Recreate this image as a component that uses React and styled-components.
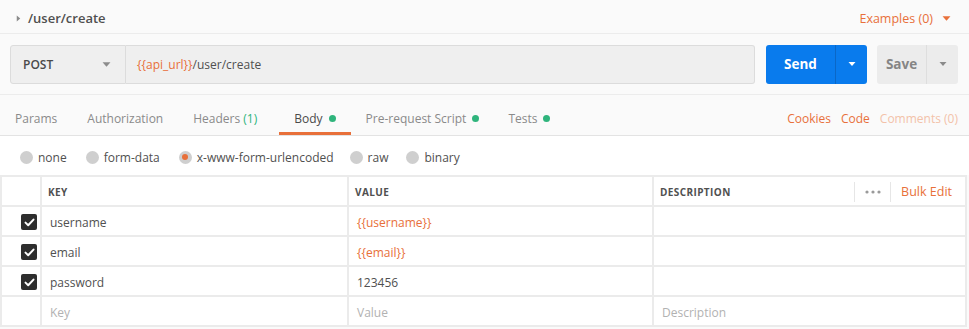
import React from "react";
import styled, { createGlobalStyle } from "styled-components";

const ORANGE = "#e8703a";
const GREEN = "#2fb47c";

const GlobalStyle = createGlobalStyle`
  body {
    margin: 0;
    font-family: "Open Sans", "Noto Sans", sans-serif;
    background: #fafafa;
  }
`;

const Page = styled.div`
  width: 969px;
  height: 329px;
  background: #fafafa;
  overflow: hidden;
  color: #505050;
  font-size: 12px;
`;

const TitleBar = styled.div`
  height: 34px;
  box-sizing: border-box;
  display: flex;
  align-items: center;
  justify-content: space-between;
  padding: 3px 18px 0 15px;
  border-bottom: 1px solid #ececec;
`;

const Title = styled.div`
  display: flex;
  align-items: center;
  gap: 6px;
  font-size: 13px;
  font-weight: 600;
  color: #4f4f4f;
`;

const Examples = styled.div`
  display: flex;
  align-items: center;
  gap: 9px;
  color: ${ORANGE};
  font-size: 12.5px;
`;

const RequestBar = styled.div`
  height: 60px;
  display: flex;
  align-items: center;
  padding: 0 11px 0 10px;
  border-bottom: 1px solid #ececec;
`;

const Method = styled.div`
  width: 116px;
  height: 39px;
  box-sizing: border-box;
  display: flex;
  align-items: center;
  justify-content: space-between;
  padding: 0 14px 0 12px;
  background: #efefef;
  border: 1px solid #dcdcdc;
  border-radius: 3px 0 0 3px;
  font-weight: 600;
  color: #4a4a4a;
`;

const Url = styled.div`
  flex: 1;
  height: 39px;
  box-sizing: border-box;
  display: flex;
  align-items: center;
  padding-left: 11px;
  background: #efefef;
  border: 1px solid #dcdcdc;
  border-left: none;
  border-radius: 0 3px 3px 0;
  color: #505050;
`;

const Var = styled.span`
  color: ${ORANGE};
`;

const SplitButton = styled.div`
  height: 39px;
  margin-left: ${(p) => p.$gap}px;
  display: flex;
  border-radius: 3px;
  overflow: hidden;
  background: ${(p) => (p.$primary ? "#097bed" : "#ececec")};
  color: ${(p) => (p.$primary ? "#fff" : "#858585")};
  font-size: 13.5px;
  font-weight: 700;
`;

const SplitMain = styled.div`
  width: ${(p) => p.$w}px;
  display: flex;
  align-items: center;
  justify-content: center;
`;

const SplitCaret = styled.div`
  width: ${(p) => p.$w}px;
  display: flex;
  align-items: center;
  justify-content: center;
  border-left: 1px solid ${(p) => (p.$primary ? "#0a67c7" : "#dedede")};
`;

const TabBar = styled.div`
  height: 40px;
  display: flex;
  align-items: stretch;
  justify-content: space-between;
  padding: 0 11px 0 15px;
  border-bottom: 1px solid #e3e3e3;
`;

const Tabs = styled.div`
  display: flex;
`;

const Tab = styled.div`
  display: flex;
  align-items: center;
  gap: 6px;
  padding: 6px 0 0;
  margin-right: ${(p) => p.$mr}px;
  color: ${(p) => (p.$active ? "#4a4a4a" : "#8a8a8a")};
  position: relative;

  &::after {
    content: "";
    display: ${(p) => (p.$active ? "block" : "none")};
    position: absolute;
    left: -15px;
    right: -15px;
    bottom: 0;
    height: 3px;
    background: ${ORANGE};
  }
`;

const Count = styled.span`
  color: ${GREEN};
`;

const Dot = styled.span`
  width: 7px;
  height: 7px;
  border-radius: 50%;
  background: ${GREEN};
`;

const Links = styled.div`
  display: flex;
  align-items: center;
  gap: 10px;
  padding-top: 6px;
`;

const LinkText = styled.span`
  color: ${(p) => (p.$muted ? "#f3c2a9" : ORANGE)};
`;

const RadioRow = styled.div`
  height: 39px;
  display: flex;
  align-items: center;
  padding: 3px 0 0 20px;
  box-sizing: border-box;
  background: #fff;
`;

const RadioItem = styled.label`
  display: flex;
  align-items: center;
  gap: 5px;
  margin-right: ${(p) => p.$mr}px;
  color: #505050;
`;

const RadioCircle = styled.span`
  width: 13px;
  height: 13px;
  border-radius: 50%;
  background: #cfcfcf;
  display: flex;
  align-items: center;
  justify-content: center;

  &::after {
    content: "";
    width: 6px;
    height: 6px;
    border-radius: 50%;
    background: ${ORANGE};
    display: ${(p) => (p.$on ? "block" : "none")};
  }
`;

const Grid = styled.div`
  width: 967px;
  box-sizing: border-box;
  display: grid;
  grid-template-columns: 38px 305px 303px 1fr;
  grid-auto-rows: 28px;
  gap: 2px;
  padding: 2px;
  background: #ebebeb;
`;

const Cell = styled.div`
  background: #fff;
  display: flex;
  align-items: center;
  padding: 2px ${(p) => (p.$check ? "3px" : "8px")} 0;
  justify-content: ${(p) => (p.$check ? "flex-end" : "flex-start")};
  color: ${(p) => (p.$placeholder ? "#b2b2b2" : p.$var ? ORANGE : "#505050")};
`;

const HeadCell = styled(Cell)`
  font-size: 10px;
  font-weight: 700;
  letter-spacing: 0.4px;
  color: #505050;
  padding: 1px 0 0 6px;
  justify-content: space-between;
`;

const HeadTools = styled.div`
  display: flex;
  align-items: center;
  height: 100%;
`;

const ToolItem = styled.div`
  display: flex;
  align-items: center;
  height: 20px;
  padding: 0 ${(p) => p.$pr}px 0 ${(p) => p.$pl}px;
  border-left: 1px solid #e6e6e6;
  font-size: 12.5px;
  font-weight: 400;
  letter-spacing: 0;
  color: ${(p) => (p.$orange ? ORANGE : "#a0a0a0")};
`;

const Box = styled.span`
  width: 16px;
  height: 16px;
  border-radius: 2px;
  background: #2e2e2e;
  display: flex;
  align-items: center;
  justify-content: center;
`;

const Caret = ({ color, dir = "down", size = 8 }) => (
  <svg width={size} height={size} viewBox="0 0 8 8">
    {dir === "down" ? (
      <path d="M0.5 2 L7.5 2 L4 6 Z" fill={color} />
    ) : (
      <path d="M2 0.5 L6 4 L2 7.5 Z" fill={color} />
    )}
  </svg>
);

const Check = () => (
  <Box>
    <svg width="11" height="9" viewBox="0 0 11 9">
      <path
        d="M1.5 4.6 L4.2 7.2 L9.5 1.6"
        stroke="#fff"
        strokeWidth="2"
        fill="none"
        strokeLinecap="round"
        strokeLinejoin="round"
      />
    </svg>
  </Box>
);

const rows = [
  { key: "username", value: "{{username}}", isVar: true },
  { key: "email", value: "{{email}}", isVar: true },
  { key: "password", value: "123456", isVar: false },
];

const tabs = [
  { label: "Params", mr: 30 },
  { label: "Authorization", mr: 30 },
  { label: "Headers", count: "(1)", mr: 37 },
  { label: "Body", dot: true, active: true, mr: 30 },
  { label: "Pre-request Script", dot: true, mr: 29 },
  { label: "Tests", dot: true, mr: 0 },
];

const radios = [
  { label: "none", mr: 19 },
  { label: "form-data", mr: 19 },
  { label: "x-www-form-urlencoded", on: true, mr: 16 },
  { label: "raw", mr: 18 },
  { label: "binary", mr: 0 },
];

export default function App() {
  return (
    <Page>
      <GlobalStyle />
      <TitleBar>
        <Title>
          <Caret color="#8a8a8a" dir="right" size={7} />
          /user/create
        </Title>
        <Examples>
          Examples (0)
          <Caret color={ORANGE} size={9} />
        </Examples>
      </TitleBar>

      <RequestBar>
        <Method>
          POST
          <Caret color="#8c8c8c" size={9} />
        </Method>
        <Url>
          <Var>{"{{api_url}}"}</Var>/user/create
        </Url>
        <SplitButton $primary $gap={11}>
          <SplitMain $w={69}>Send</SplitMain>
          <SplitCaret $primary $w={31}>
            <Caret color="#fff" size={8} />
          </SplitCaret>
        </SplitButton>
        <SplitButton $gap={10}>
          <SplitMain $w={49}>Save</SplitMain>
          <SplitCaret $w={31}>
            <Caret color="#8a8a8a" size={8} />
          </SplitCaret>
        </SplitButton>
      </RequestBar>

      <TabBar>
        <Tabs>
          {tabs.map((t) => (
            <Tab key={t.label} $active={t.active} $mr={t.mr}>
              <span>
                {t.label}
                {t.count && <Count> {t.count}</Count>}
              </span>
              {t.dot && <Dot />}
            </Tab>
          ))}
        </Tabs>
        <Links>
          <LinkText>Cookies</LinkText>
          <LinkText>Code</LinkText>
          <LinkText $muted>Comments (0)</LinkText>
        </Links>
      </TabBar>

      <RadioRow>
        {radios.map((r) => (
          <RadioItem key={r.label} $mr={r.mr}>
            <RadioCircle $on={r.on} />
            {r.label}
          </RadioItem>
        ))}
      </RadioRow>

      <Grid>
        <HeadCell />
        <HeadCell>KEY</HeadCell>
        <HeadCell>VALUE</HeadCell>
        <HeadCell>
          DESCRIPTION
          <HeadTools>
            <ToolItem $pl={10} $pr={9}>
              <svg width="16" height="4" viewBox="0 0 16 4">
                <circle cx="2" cy="2" r="1.6" fill="#9a9a9a" />
                <circle cx="8" cy="2" r="1.6" fill="#9a9a9a" />
                <circle cx="14" cy="2" r="1.6" fill="#9a9a9a" />
              </svg>
            </ToolItem>
            <ToolItem $pl={10} $pr={13} $orange>
              Bulk Edit
            </ToolItem>
          </HeadTools>
        </HeadCell>

        {rows.map((r) => (
          <React.Fragment key={r.key}>
            <Cell $check>
              <Check />
            </Cell>
            <Cell>{r.key}</Cell>
            <Cell $var={r.isVar}>{r.value}</Cell>
            <Cell />
          </React.Fragment>
        ))}

        <Cell $check />
        <Cell $placeholder>Key</Cell>
        <Cell $placeholder>Value</Cell>
        <Cell $placeholder>Description</Cell>
      </Grid>
    </Page>
  );
}
